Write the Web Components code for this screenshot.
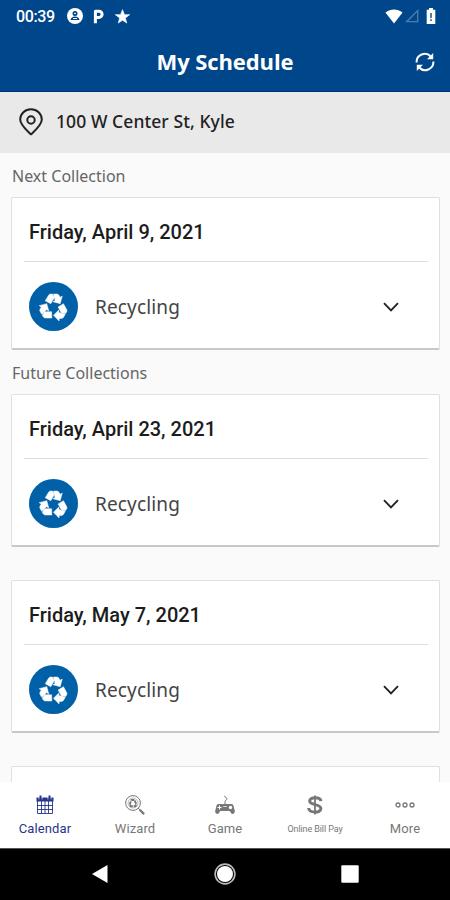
<!DOCTYPE html>
<html lang="en">
<head>
<meta charset="utf-8">
<title>My Schedule</title>
<style>
  html,body{margin:0;height:100%;background:#fafafa}
</style>
</head>
<body>
<schedule-app></schedule-app>
<script>
// one fold of the recycling loop: flat band plus arrow head
const FOLD = `<path d="M5.600 7.600 8.300 3.100Q8.800 2.300 9.800 2.300h1.400l1.500 2.800L9.900 9.900z"/><path d="M12 2.300h2.600q1 0 1.500.8l1 1.700 1.700-.9-1.600 5.900-5.700-1.500 1.700-1z"/>`;

const ICONS = {
  account: `<svg viewBox="0 0 16 16" width="16" height="16"><circle cx="8" cy="8" r="8" fill="#fff"/><circle cx="8" cy="5.400" r="2.500" fill="#00468b"/><path d="M3.600 12c0-4.800 8.800-4.800 8.800 0z" fill="#00468b"/><path d="M7 5.400h2M6 10.500h4" stroke="#fff"/></svg>`,
  parking: `<svg viewBox="0 0 12 15" width="12" height="15"><path d="M2.400 14.300V2.200H6a2.900 2.900 0 0 1 0 6.200H2.400" fill="none" stroke="#fff" stroke-width="3" stroke-linejoin="round"/></svg>`,
  star: `<svg viewBox="0 0 24 24" width="15" height="15"><path d="M12 18 18.800 22.500l-2.200-8L23.500 9h-8.300L12 1 8.800 9H.5l6.900 5.500-2.200 8z" fill="#fff" stroke="#fff"/></svg>`,
  wifi: `<svg viewBox="0 0 18 15" width="18" height="15"><path d="M9 14.600.4 3.400C5.800-.6 12.200-.6 17.600 3.400z" fill="#fff"/></svg>`,
  signal: `<svg viewBox="0 0 14 14" width="14" height="14"><path d="M12.700 1.600v11.100H1.600z" fill="none" stroke="#fff" stroke-opacity=".3" stroke-width="1.300"/></svg>`,
  battery: `<svg viewBox="0 0 10 16" width="10" height="16"><path d="M3 0h4v1.700h2.300V16H.7V1.700H3z" fill="#fff"/><path d="M5 5v5M5 11.300V13" stroke="#00468b" stroke-width="1.400"/></svg>`,
  refresh: `<svg viewBox="0 0 20 20" width="20" height="20" fill="none" stroke="#fff" stroke-width="2"><path d="M1.600 10.500A8.200 8.200 0 0 1 15.800 4.500M18.400 9.500A8.200 8.200 0 0 1 4.200 15.500"/><path d="M18.200 1v6.200H12zM1.800 19v-6.200H8z" fill="#fff" stroke="none"/></svg>`,
  pin: `<svg viewBox="0 0 24 28" width="24" height="28" fill="none" stroke="#222" stroke-width="2"><path d="M12 26.400C7.500 22 1.200 17 1.200 11.500a10.800 10.300 0 0 1 21.600 0C22.800 17 16.500 22 12 26.400z" stroke-linejoin="round"/><circle cx="12" cy="12" r="3.700"/></svg>`,
  recycle: `<svg viewBox="0 0 24 24" width="31" height="31" fill="#fff" stroke="#fff" stroke-width=".35">${[0, 120, 240].map((a) => `<g transform="rotate(${a} 12 12.800)">${FOLD}</g>`).join("")}</svg>`,
  chevron: `<svg viewBox="0 0 16 10" width="16" height="10"><path d="M1 1.200 8 8.300l7-7.100" fill="none" stroke="#222" stroke-width="1.900"/></svg>`,
  calendar: `<svg viewBox="0 0 18 20" width="18" height="20" fill="none" stroke="currentColor"><path d="M1.500 6v12.500h15V6M5.500 6v12.500M9 6v12.500M12.500 6v12.500M1 10.500h16M1 14.500h16" stroke-width=".9"/><path d="M.5 2.500h17v4H.5z" fill="currentColor" stroke="none"/><path d="M4.500.5v4M13.500.5v4" stroke-width="2"/><path d="M2.900 2v2.500M6.100 2v2.500M11.900 2v2.500M15.100 2v2.500" stroke="#fff" stroke-width=".6"/></svg>`,
  wizard: `<svg viewBox="0 0 20 20" width="20" height="20" fill="none" stroke="currentColor"><circle cx="8" cy="8" r="7.400"/><path d="M4.600 9.500 6.500 5h3l1.900 4.500-1.300 1.700H5.900z" stroke-width="1.900" stroke-dasharray="3.500 .8"/><circle cx="8" cy="8" r="5" stroke-width=".5"/><path d="m13 13 2 2"/><path d="m14.700 14.700 4.400 4.400" stroke-width="2.200"/></svg>`,
  game: `<svg viewBox="0 0 20 20" width="20" height="20"><path d="M10 9V6.500c0-1.500 2.500-1.500 2-3C11.700 2 9.500 2.800 9.500.8" fill="none" stroke="currentColor"/><path d="M3.500 9h13c1.500 0 2 1 2.300 3l1 4c.4 2.800-3 4-4 1.800L14.800 16H5.200l-1 1.800C3.200 20-.2 18.800.2 16l1-4c.3-2 .8-3 2.300-3z" fill="currentColor"/><path d="M4.500 10.500v4M2.500 12.500h4" stroke="#fff"/><circle cx="15.500" cy="12.500" r="1.700" fill="#fff"/><path d="M8.200 11.500h3.600" stroke="#fff" stroke-width=".7"/></svg>`,
  dollar: `<svg viewBox="0 0 16 20" width="16" height="20" fill="none" stroke="currentColor"><path d="M14 6.200C13.500 1.800 2.600 1.500 2.600 6.100c0 4.600 11.300 2.500 11.300 7.500C13.900 18.500 2 18.200 1.600 13" stroke-width="3"/><path d="M8 .5v19" stroke-width="1.800"/></svg>`,
  more: `<svg viewBox="0 0 20 20" width="20" height="20" fill="none" stroke="currentColor" stroke-width="1.300"><circle cx="3" cy="10" r="2"/><circle cx="10" cy="10" r="2"/><circle cx="17" cy="10" r="2"/></svg>`
};

// attach an open shadow root with shared resets
function shadow(el, css, html) {
  el.attachShadow({ mode: "open" }).innerHTML =
    `<style>*,*::before,*::after{box-sizing:border-box}:host{display:block;box-sizing:border-box}svg{display:block;flex:none}${css}</style>${html}`;
}

class StatusBar extends HTMLElement {
  connectedCallback() {
    shadow(this, `
      :host{display:flex;align-items:center;height:32px;padding:0 14px 0 16px;background:#00468b;color:#fff;font:500 16px/33px Roboto,sans-serif}
      .time{width:51px;letter-spacing:-.4px}
      .left{display:flex;align-items:center;gap:10px;flex:1}
      .right{display:flex;align-items:center}
      .right svg:nth-child(2){margin-left:2px}
      .right svg:nth-child(3){margin-left:7px}
    `, `<span class="time">00:39</span>
      <div class="left">${ICONS.account}${ICONS.parking}${ICONS.star}</div>
      <div class="right">${ICONS.wifi}${ICONS.signal}${ICONS.battery}</div>`);
  }
}

class TitleBar extends HTMLElement {
  connectedCallback() {
    shadow(this, `
      :host{display:grid;grid-template-columns:1fr auto 1fr;align-items:center;height:60px;padding:0 15px;background:#00468b;border-bottom:1px solid #003078;color:#fff}
      h1{grid-column:2;margin:0 0 2px;font:700 22px/56px "Open Sans",sans-serif;letter-spacing:-.1px}
      .action{justify-self:end}
    `, `<h1><slot></slot></h1><div class="action">${ICONS.refresh}</div>`);
  }
}

class AddressBar extends HTMLElement {
  connectedCallback() {
    shadow(this, `
      :host{display:flex;align-items:center;gap:13px;height:61px;padding:0 19px 1px;background:#e9e9e9;color:#222;font:500 17.500px/24px "Noto Sans",sans-serif}
      span{margin-top:-3px;letter-spacing:.08px}
    `, `${ICONS.pin}<span><slot></slot></span>`);
  }
}

class SectionLabel extends HTMLElement {
  connectedCallback() {
    shadow(this, `:host{height:44px;padding:0 12px;color:#666;font:400 16px/46px "Noto Sans",sans-serif}`, `<slot></slot>`);
  }
}

class CollectionCard extends HTMLElement {
  connectedCallback() {
    shadow(this, `
      :host{height:153px;margin:0 10px 0 11px;padding:0 11px 0 12px;background:#fff;border:1px solid #e0e0e0;border-bottom:2px solid #c8c8c8;border-radius:2px}
      h2{margin:0;height:64px;padding:0 5px;border-bottom:1px solid #dedede;color:#1c1c1c;font:500 20px/69px Roboto,sans-serif}
      .row{display:flex;align-items:center;height:89px;padding:0 29px 0 5px}
      .disc{display:flex;align-items:center;justify-content:center;width:49px;height:49px;margin-right:17px;border-radius:50%;background:#0060a8}
      .name{flex:1;color:#444;font:400 19px/26px "Noto Sans",sans-serif;letter-spacing:.15px}
    `, this.hasAttribute("date") ? `<h2>${this.getAttribute("date")}</h2>
      <div class="row"><div class="disc">${ICONS.recycle}</div><span class="name"><slot></slot></span>${ICONS.chevron}</div>` : "");
  }
}

class TabItem extends HTMLElement {
  connectedCallback() {
    shadow(this, `
      :host{display:flex;flex-direction:column;align-items:center;flex:1;padding-top:13px;color:#777;font:400 13px/20px Roboto,sans-serif}
      :host([active]){color:#26348b}
      :host([small]) span{font-size:9px;letter-spacing:-.1px}
      span{margin-top:4px;white-space:nowrap;letter-spacing:.1px}
    `, `${ICONS[this.getAttribute("icon")]}<span><slot></slot></span>`);
  }
}

class TabBar extends HTMLElement {
  connectedCallback() {
    shadow(this, `:host{display:flex;flex:none;height:66px;background:#fff}`, `<slot></slot>`);
  }
}

class SystemNav extends HTMLElement {
  connectedCallback() {
    shadow(this, `
      :host{display:flex;flex:none;align-items:center;justify-content:space-between;height:52px;padding:0 91px 1px;background:#000;border-top:1px solid #555}
    `, `<svg viewBox="0 0 18 20" width="18" height="20"><path d="M1 10 16.500 1v18z" fill="#fff"/></svg>
      <svg viewBox="0 0 22 22" width="22" height="22"><circle cx="11" cy="11" r="8" fill="#fff"/><circle cx="11" cy="11" r="9.900" fill="none" stroke="#bbb" stroke-width="1.600"/></svg>
      <svg viewBox="0 0 18 18" width="18" height="18"><rect x=".3" y=".3" width="17.400" height="17.400" rx="1" fill="#fff"/></svg>`);
  }
}

class ScheduleApp extends HTMLElement {
  connectedCallback() {
    shadow(this, `
      :host{display:flex;flex-direction:column;width:450px;height:900px;overflow:hidden;background:#fafafa}
      main{flex:1;min-height:0;overflow:hidden}
      collection-card + collection-card{margin-top:33px}
    `, `<status-bar></status-bar>
      <title-bar>My Schedule</title-bar>
      <main>
        <address-bar>100 W Center St, Kyle</address-bar>
        <section-label>Next Collection</section-label>
        <collection-card date="Friday, April 9, 2021">Recycling</collection-card>
        <section-label>Future Collections</section-label>
        <collection-card date="Friday, April 23, 2021">Recycling</collection-card>
        <collection-card date="Friday, May 7, 2021">Recycling</collection-card>
        <collection-card></collection-card>
      </main>
      <tab-bar>
        <tab-item icon="calendar" active>Calendar</tab-item>
        <tab-item icon="wizard">Wizard</tab-item>
        <tab-item icon="game">Game</tab-item>
        <tab-item icon="dollar" small>Online Bill Pay</tab-item>
        <tab-item icon="more">More</tab-item>
      </tab-bar>
      <system-nav></system-nav>`);
  }
}

customElements.define("status-bar", StatusBar);
customElements.define("title-bar", TitleBar);
customElements.define("address-bar", AddressBar);
customElements.define("section-label", SectionLabel);
customElements.define("collection-card", CollectionCard);
customElements.define("tab-item", TabItem);
customElements.define("tab-bar", TabBar);
customElements.define("system-nav", SystemNav);
customElements.define("schedule-app", ScheduleApp);
</script>
</body>
</html>
